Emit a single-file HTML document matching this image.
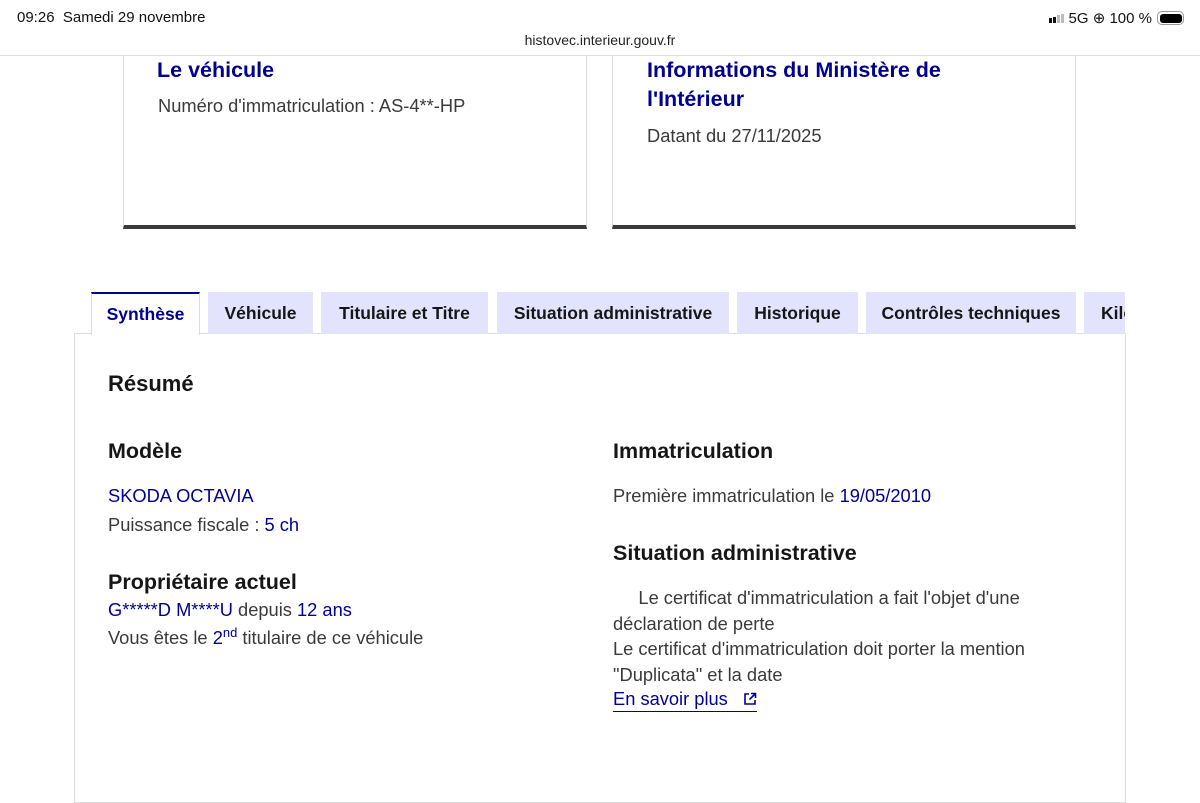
<!DOCTYPE html>
<html><head><meta charset="utf-8"><style>
*{margin:0;padding:0;box-sizing:border-box}
body{width:1200px;height:788px;overflow:hidden;background:#fff;font-family:"Liberation Sans",sans-serif;color:#3a3a3a;position:relative}
.a{position:absolute;white-space:nowrap}
.h{color:#161616;font-weight:bold;font-size:21.5px}
.t{font-size:18.3px}
.b{color:#000091}
.tab{position:absolute;top:292px;height:42px;background:#e3e3fd;color:#161616;font-weight:bold;font-size:17.5px;line-height:42px;text-align:center;overflow:hidden;white-space:nowrap}
</style></head><body>
<div class="a" style="left:17px;top:9px;font-size:15px;color:#111">09:26&nbsp;&nbsp;Samedi 29 novembre</div>
<div class="a" style="right:16px;top:9px;font-size:15px;color:#111;display:flex;align-items:center;gap:5px">
<span style="display:inline-flex;align-items:flex-end;gap:1px;height:9px"><i style="width:3px;height:5px;background:#111"></i><i style="width:3px;height:6px;background:#111"></i><i style="width:3px;height:8px;background:#bbb"></i><i style="width:3px;height:9px;background:#bbb"></i></span>
5G ⊕ 100 %<span style="display:inline-block;width:27px;height:14px;border:1.5px solid #999;border-radius:5px;padding:1.5px"><span style="display:block;width:100%;height:100%;background:#000;border-radius:3px"></span></span></div>
<div class="a" style="left:0;width:1200px;text-align:center;top:32px;font-size:14px;color:#222">histovec.interieur.gouv.fr</div>
<div class="a" style="left:0;top:55px;width:1200px;height:1px;background:#ddd"></div>

<div class="a" style="left:123px;top:55px;width:464px;height:174px;border:1px solid #ddd;border-top:none;border-bottom:4px solid #3a3a3a"></div>
<div class="a" style="left:612px;top:55px;width:464px;height:174px;border:1px solid #ddd;border-top:none;border-bottom:4px solid #3a3a3a"></div>
<div class="a h b" style="left:157px;top:58px">Le véhicule</div>
<div class="a t" style="left:158px;top:95px">Numéro d'immatriculation : AS-4**-HP</div>
<div class="a h b" style="left:647px;top:56px;line-height:29px">Informations du Ministère de<br>l'Intérieur</div>
<div class="a t" style="left:647px;top:125px">Datant du 27/11/2025</div>

<div class="a" style="left:74px;top:333px;width:1052px;height:470px;border:1px solid #ddd"></div>
<div class="tab" style="left:91px;width:109px;background:#fff;color:#000091;border-top:2px solid #000091;border-left:1px solid #ddd;border-right:1px solid #ddd;height:43px;line-height:40px">Synthèse</div>
<div class="tab" style="left:208px;width:105px">Véhicule</div>
<div class="tab" style="left:321px;width:167px">Titulaire et Titre</div>
<div class="tab" style="left:497px;width:232px">Situation administrative</div>
<div class="tab" style="left:737px;width:121px">Historique</div>
<div class="tab" style="left:866px;width:210px">Contrôles techniques</div>
<div class="tab" style="left:1084px;width:41px;text-align:left;padding-left:17px">Kilométrage</div>

<div class="a h" style="left:108px;top:371px;font-size:22px">Résumé</div>
<div class="a h" style="left:108px;top:439px">Modèle</div>
<div class="a t b" style="left:108px;top:485px">SKODA OCTAVIA</div>
<div class="a t" style="left:108px;top:514px">Puissance fiscale : <span class="b">5 ch</span></div>
<div class="a h" style="left:108px;top:570px">Propriétaire actuel</div>
<div class="a t" style="left:108px;top:599px"><span class="b">G*****D M****U</span> depuis <span class="b">12 ans</span></div>
<div class="a t" style="left:108px;top:625px">Vous êtes le <span class="b">2<sup style="font-size:13px">nd</sup></span> titulaire de ce véhicule</div>

<div class="a h" style="left:613px;top:439px">Immatriculation</div>
<div class="a t" style="left:613px;top:485px">Première immatriculation le <span class="b">19/05/2010</span></div>
<div class="a h" style="left:613px;top:541px">Situation administrative</div>
<div class="a t" style="left:613px;top:585px;line-height:25.5px">&nbsp;&nbsp;&nbsp;&nbsp;&nbsp;Le certificat d'immatriculation a fait l'objet d'une<br>déclaration de perte<br>Le certificat d'immatriculation doit porter la mention<br>"Duplicata" et la date</div>
<div class="a t b" style="left:613px;top:688px;border-bottom:1.5px solid #000091;padding-bottom:1px">En savoir plus&nbsp;&nbsp;
<svg width="14" height="14" viewBox="0 0 14 14" style="vertical-align:-1px"><path d="M6 2H2v10h10V8M8 1.5h4.5V6M12.5 1.5 6.5 7.5" fill="none" stroke="#000091" stroke-width="1.6"/></svg></div>
</body></html>
